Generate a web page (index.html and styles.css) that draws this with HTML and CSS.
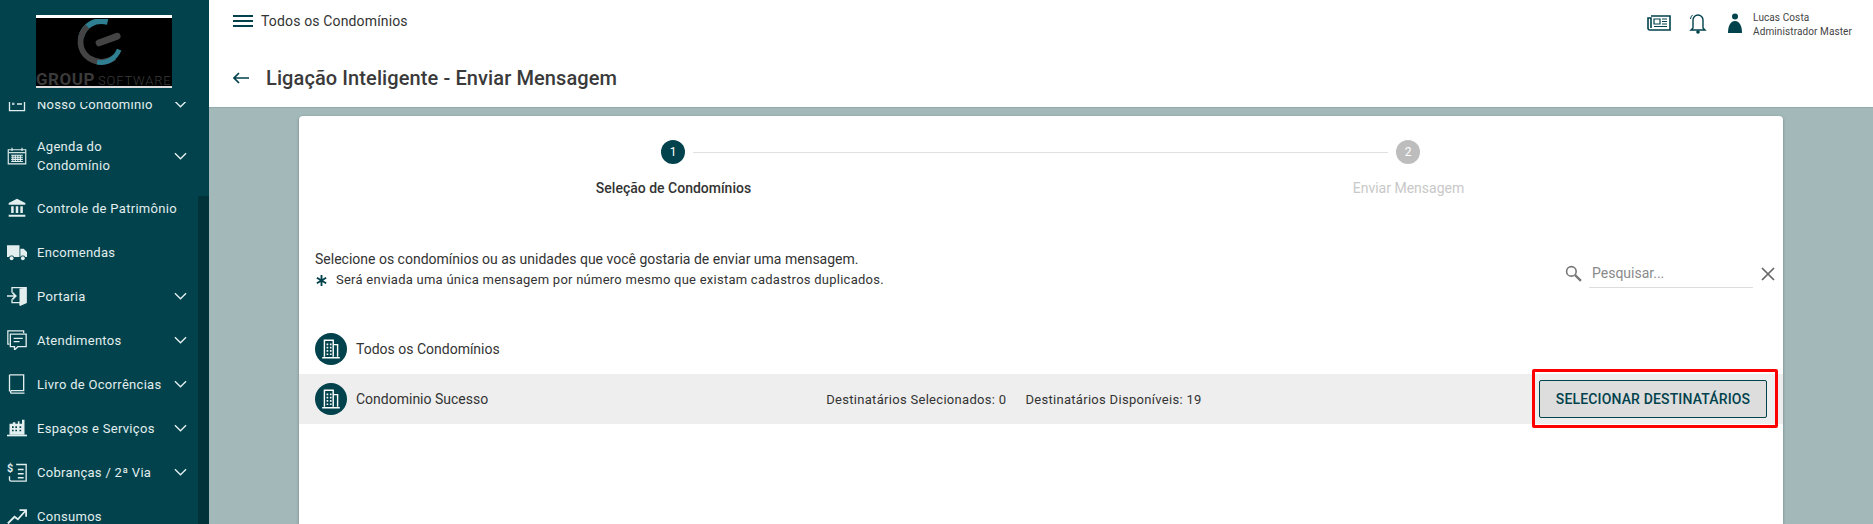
FILE: index.html
```html
<!DOCTYPE html>
<html lang="pt-BR">

<head>
    <meta charset="UTF-8">
    <meta name="viewport" content="width=device-width, initial-scale=1.0">
    <title>Ligação Inteligente - Enviar Mensagem</title>
    <link rel="stylesheet" href="styles.css">
</head>

<body>
    <aside class="sidebar">
        <div class="logo-wrap">
            <div class="logo">
                <svg class="logo-mark" viewBox="0 0 48 48">
                    <path d="M33 3 C20 0 8 6 5 20" fill="none" stroke="#2f7f92" stroke-width="6" />
                    <path d="M12 8 C2 17 2 33 14 41 C22 46 32 46 40 40" fill="none" stroke="#444" stroke-width="6" />
                    <path d="M22 45 C32 47 41 42 45 32" fill="none" stroke="#2f7f92" stroke-width="5" />
                    <path d="M24 25 L43 18" fill="none" stroke="#444" stroke-width="7" stroke-linecap="round" />
                </svg>
                <div class="logo-text"><b>GROUP</b> <span>SOFTWARE</span></div>
            </div>
        </div>
        <nav class="menu">
            <a class="menu-item menu-first">
                <svg class="menu-icon" viewBox="0 0 24 24"><path d="M3 3h18v17H3zM6 9h3M6 12h3M12 12h6" fill="none" stroke="currentColor" stroke-width="1.6" /></svg>
                <span class="menu-label">Nosso Condomínio</span>
                <svg class="chevron" viewBox="0 0 14 8"><path d="M1 1l6 6 6-6" /></svg>
            </a>
            <a class="menu-item menu-tall">
                <svg class="menu-icon" viewBox="0 0 24 24"><path d="M1.500 4.500h21v17h-21z" fill="none" stroke="currentColor" stroke-width="1.400" /><path d="M2 8h20" stroke="currentColor" stroke-width="1.400" /><path d="M6 2v4M18 2v4" stroke="currentColor" stroke-width="1.400" /><path d="M5 11h14M5 13.500h14M5 16h14M5 18.500h14M7 10.500v8.500M10 10.500v8.500M13 10.500v8.500M16 10.500v8.500" stroke="currentColor" stroke-width="1.300" /></svg>
                <span class="menu-label">Agenda do<br>Condomínio</span>
                <svg class="chevron" viewBox="0 0 14 8"><path d="M1 1l6 6 6-6" /></svg>
            </a>
            <a class="menu-item">
                <svg class="menu-icon" viewBox="0 0 24 24"><path d="M12 1L2 6v2h20V6zM5 10h3v8H5zM10.500 10h3v8h-3zM16 10h3v8h-3zM2 20h20v2.500H2z" fill="currentColor" /></svg>
                <span class="menu-label">Controle de Patrimônio</span>
            </a>
            <a class="menu-item">
                <svg class="menu-icon" viewBox="0 0 24 24"><path d="M0 4h15v14H8.500a3.500 3.500 0 0 0-6 0H0zM16 8h4l4 4v6h-2a3.500 3.500 0 0 0-6 0z" fill="currentColor" /><circle cx="5.500" cy="19.500" r="2.300" fill="currentColor" /><circle cx="19" cy="19.500" r="2.300" fill="currentColor" /></svg>
                <span class="menu-label">Encomendas</span>
            </a>
            <a class="menu-item">
                <svg class="menu-icon" viewBox="0 0 24 24"><path d="M6 8V2h17v18l-7 3v-3H6v-4" fill="none" stroke="currentColor" stroke-width="1.600" /><path d="M15 3l8-1v18l-8 3z" fill="currentColor" /><path d="M0 12h10M6.500 8l4 4-4 4" fill="none" stroke="currentColor" stroke-width="2" /></svg>
                <span class="menu-label">Portaria</span>
                <svg class="chevron" viewBox="0 0 14 8"><path d="M1 1l6 6 6-6" /></svg>
            </a>
            <a class="menu-item">
                <svg class="menu-icon" viewBox="0 0 24 24"><path d="M3 17H1V1h19v3" fill="none" stroke="currentColor" stroke-width="1.500" /><path d="M4 5h19v15H13l-4 4v-4H4z" fill="none" stroke="currentColor" stroke-width="1.600" /><path d="M8 10h11M8 14h7" stroke="currentColor" stroke-width="1.600" /></svg>
                <span class="menu-label">Atendimentos</span>
                <svg class="chevron" viewBox="0 0 14 8"><path d="M1 1l6 6 6-6" /></svg>
            </a>
            <a class="menu-item">
                <svg class="menu-icon" viewBox="0 0 24 24"><path d="M3 1h17v19H5a2 2 0 0 0 0 3h16" fill="none" stroke="currentColor" stroke-width="1.600" /><path d="M3 1v20" stroke="currentColor" stroke-width="1.600" /></svg>
                <span class="menu-label">Livro de Ocorrências</span>
                <svg class="chevron" viewBox="0 0 14 8"><path d="M1 1l6 6 6-6" /></svg>
            </a>
            <a class="menu-item">
                <svg class="menu-icon" viewBox="0 0 24 24"><path d="M3 7h4V5h3v2h3V4h2v3h3V2h3v18H3z" fill="currentColor" /><path d="M0 20h24v2H0z" fill="currentColor" /><path d="M6 10h2v2H6zM10 10h2v2h-2zM6 14h2v2H6zM10 14h2v2h-2zM15 10h2v2h-2zM15 14h2v2h-2z" fill="#01424c" /></svg>
                <span class="menu-label">Espaços e Serviços</span>
                <svg class="chevron" viewBox="0 0 14 8"><path d="M1 1l6 6 6-6" /></svg>
            </a>
            <a class="menu-item">
                <svg class="menu-icon" viewBox="0 0 24 24"><path d="M11 3h12v20H5a2 2 0 0 1-2-2v-4" fill="none" stroke="currentColor" stroke-width="1.600" /><path d="M13 9h7M13 14h7M13 19h7" stroke="currentColor" stroke-width="1.800" /><text x="0" y="12" class="menu-dollar">$</text></svg>
                <span class="menu-label">Cobranças / 2ª Via</span>
                <svg class="chevron" viewBox="0 0 14 8"><path d="M1 1l6 6 6-6" /></svg>
            </a>
            <a class="menu-item">
                <svg class="menu-icon" viewBox="0 0 24 24"><path d="M1 21l8-8 4 3 9-10M15 5h8v8" fill="none" stroke="currentColor" stroke-width="2.200" /></svg>
                <span class="menu-label">Consumos</span>
            </a>
        </nav>
        <div class="sidebar-scroll"></div>
    </aside>

    <div class="main">
        <header class="header">
            <div class="topbar">
                <div class="hamburger"><span></span><span></span><span></span></div>
                <span class="topbar-title">Todos os Condomínios</span>
                <div class="topbar-right">
                    <svg class="icon-news" viewBox="0 0 24 16"><path d="M4 1h19v14H3a2 2 0 0 1-2-2V3h3v10" fill="none" stroke="#01424c" stroke-width="1.600" /><path d="M7 4h6v5H7z" fill="none" stroke="#01424c" stroke-width="1.200" /><path d="M15 4h5M15 6.500h5M15 9h5M7 11.500h13" stroke="#01424c" stroke-width="1.200" /></svg>
                    <svg class="icon-bell" viewBox="0 0 18 22"><path d="M4 16V8a5 5 0 0 1 10 0v8l2 2H2z" fill="none" stroke="#01424c" stroke-width="1.400" /><circle cx="9" cy="20" r="1.800" fill="#01424c" /><path d="M1.500 7a6 6 0 0 1 2-4" fill="none" stroke="#01424c" stroke-width="1" /></svg>
                    <svg class="icon-user" viewBox="0 0 14 20"><circle cx="7" cy="3.500" r="3" fill="#01424c" /><path d="M0 20c0-6 2-12 7-12s7 6 7 12z" fill="#01424c" /></svg>
                    <div class="user-info">
                        <div>Lucas Costa</div>
                        <div>Administrador Master</div>
                    </div>
                </div>
            </div>
            <div class="page-title">
                <svg class="back-arrow" viewBox="0 0 16 12"><path d="M16 6H1M6 1L1 6l5 5" fill="none" stroke="#01424c" stroke-width="1.700" /></svg>
                <h1>Ligação Inteligente - Enviar Mensagem</h1>
            </div>
        </header>

        <div class="content">
            <section class="card">
                <div class="stepper-track">
                    <div class="step-circle step-active">1</div>
                    <div class="step-line"></div>
                    <div class="step-circle step-off">2</div>
                </div>
                <div class="stepper-labels">
                    <div class="step-label">Seleção de Condomínios</div>
                    <div class="step-label step-label-off">Enviar Mensagem</div>
                </div>

                <div class="intro">
                    <div class="intro-text">
                        <p>Selecione os condomínios ou as unidades que você gostaria de enviar uma mensagem.</p>
                        <p class="intro-note">
                            <svg class="asterisk" viewBox="0 0 14 14"><path d="M7 1v12M2 4l10 6M12 4L2 10" stroke="#01424c" stroke-width="2" /></svg>
                            Será enviada uma única mensagem por número mesmo que existam cadastros duplicados.
                        </p>
                    </div>
                    <div class="search">
                        <svg class="search-icon" viewBox="0 0 16 16"><circle cx="6" cy="6" r="4.500" fill="none" stroke="#777" stroke-width="1.500" /><path d="M9.500 9.500L15 15" stroke="#777" stroke-width="2.200" /></svg>
                        <div class="search-input">Pesquisar...</div>
                        <svg class="search-clear" viewBox="0 0 14 14"><path d="M1 1l12 12M13 1L1 13" stroke="#666" stroke-width="1.700" /></svg>
                    </div>
                </div>

                <div class="list-row">
                    <div class="avatar">
                        <svg viewBox="0 0 20 20"><path d="M4 17V2h8v15M12 6h4v11M2 18h16" fill="none" stroke="#fff" stroke-width="1.300" /><path d="M6 5h1.500v1.500H6zM9 5h1.500v1.500H9zM6 8h1.500v1.500H6zM9 8h1.500v1.500H9zM6 11h1.500v1.500H6zM9 11h1.500v1.500H9zM6 14h1.500v1.500H6zM9 14h1.500v1.500H9z" fill="#fff" /></svg>
                    </div>
                    <span class="row-name">Todos os Condomínios</span>
                </div>
                <div class="list-row list-row-grey">
                    <div class="avatar">
                        <svg viewBox="0 0 20 20"><path d="M4 17V2h8v15M12 6h4v11M2 18h16" fill="none" stroke="#fff" stroke-width="1.300" /><path d="M6 5h1.500v1.500H6zM9 5h1.500v1.500H9zM6 8h1.500v1.500H6zM9 8h1.500v1.500H9zM6 11h1.500v1.500H6zM9 11h1.500v1.500H9zM6 14h1.500v1.500H6zM9 14h1.500v1.500H9z" fill="#fff" /></svg>
                    </div>
                    <span class="row-name">Condominio Sucesso</span>
                    <div class="row-stats">
                        <span>Destinatários Selecionados: 0</span>
                        <span>Destinatários Disponíveis: 19</span>
                    </div>
                    <button class="select-btn" type="button">SELECIONAR DESTINATÁRIOS</button>
                    <div class="highlight-box"></div>
                </div>
            </section>
        </div>
    </div>
</body>

</html>
```

FILE: styles.css
```css
/* Reset default margin and padding */
* {
    margin: 0;
    padding: 0;
    box-sizing: border-box;
}

body {
    font-family: 'Roboto', sans-serif;
    height: 100vh;
    display: flex;
    overflow: hidden;
    color: #333;
    background: #a2b8b9;
}

/* Sidebar */
.sidebar {
    position: relative;
    width: 209px;
    flex-shrink: 0;
    display: flex;
    flex-direction: column;
    background-color: #01424c;
    color: #e3eeee;
}

.logo-wrap {
    height: 102px;
    flex-shrink: 0;
    padding: 15px 0 0 36px;
}

.logo {
    width: 136px;
    height: 73px;
    background: #000;
    border-top: 3px solid #fff;
    border-bottom: 2px solid #ddd;
    display: flex;
    flex-direction: column;
    align-items: center;
    overflow: hidden;
}

.logo-mark {
    width: 46px;
    height: 46px;
    margin: 1px 10px 0 0;
    flex-shrink: 0;
}

.logo-text {
    width: 136px;
    margin-top: 6px;
    white-space: nowrap;
    color: #3a3a3a;
    font-size: 13px;
    line-height: 16px;
}

.logo-text b {
    font-size: 17px;
    letter-spacing: 0.5px;
}

.logo-text span {
    letter-spacing: 0.8px;
    font-weight: 300;
}

.menu {
    flex: 1;
    overflow: hidden;
}

.menu-item {
    height: 44px;
    display: flex;
    align-items: center;
    padding-left: 7px;
    font-size: 13px;
    letter-spacing: 0.3px;
    line-height: 19px;
}

.menu-first {
    margin-top: -20px;
}

.menu-tall {
    height: 60px;
}

.menu-icon {
    width: 20px;
    height: 20px;
    flex-shrink: 0;
    margin-right: 10px;
}

.menu-dollar {
    font-size: 13px;
    font-weight: 700;
    fill: currentColor;
}

.menu-label {
    width: 137px;
    white-space: nowrap;
}

.chevron {
    width: 13px;
    height: 8px;
    fill: none;
    stroke: currentColor;
    stroke-width: 1.500;
}

.sidebar-scroll {
    position: absolute;
    top: 196px;
    right: 0;
    bottom: 0;
    width: 11px;
    background: #00323a;
}

/* Main column */
.main {
    flex: 1;
    min-width: 0;
    display: flex;
    flex-direction: column;
}

.header {
    height: 108px;
    background: #fff;
    padding: 0 21px 0 24px;
    border-bottom: 1px solid #90a9aa;
}

.topbar {
    height: 44px;
    display: flex;
    align-items: center;
    padding-bottom: 2px;
}

.hamburger {
    width: 20px;
    display: flex;
    flex-direction: column;
    gap: 3px;
    margin-right: 8px;
}

.hamburger span {
    height: 2px;
    background: #01424c;
}

.topbar-title {
    font-size: 14px;
    letter-spacing: 0.15px;
}

.topbar-right {
    margin-left: auto;
    display: flex;
    align-items: center;
    margin-top: 4px;
}

.icon-news {
    width: 24px;
    height: 16px;
    margin-right: 18px;
}

.icon-bell {
    width: 18px;
    height: 22px;
    margin-right: 21px;
}

.icon-user {
    width: 14px;
    height: 20px;
    margin-right: 11px;
}

.user-info {
    font-size: 10px;
    line-height: 14px;
    letter-spacing: 0.1px;
    color: #444;
    margin-top: 3px;
}

.page-title {
    height: 64px;
    display: flex;
    align-items: center;
    padding-top: 3px;
}

.back-arrow {
    width: 16px;
    height: 12px;
    margin-right: 17px;
}

h1 {
    font-size: 20px;
    font-weight: 500;
    letter-spacing: 0.1px;
    color: #3a3a3a;
}

.content {
    flex: 1;
    padding: 8px 90px 0 90px;
    overflow: hidden;
}

.card {
    height: 100%;
    background: #fff;
    border-radius: 4px 4px 0 0;
    box-shadow: 0 1px 3px rgba(0, 0, 0, 0.3);
}

/* Stepper */
.stepper-track {
    display: flex;
    align-items: center;
    padding: 24px 363px 0 362px;
}

.step-circle {
    width: 24px;
    height: 24px;
    border-radius: 50%;
    flex-shrink: 0;
    display: flex;
    align-items: center;
    justify-content: center;
    color: #fff;
    font-size: 12px;
}

.step-active {
    background: #01424c;
}

.step-off {
    background: #bdbdbd;
}

.step-line {
    flex: 1;
    height: 1px;
    margin: 0 8px;
    background: #e0e0e0;
}

.stepper-labels {
    display: grid;
    grid-template-columns: 1fr 1fr;
    padding: 0 7px;
    margin-top: 16px;
}

.step-label {
    text-align: center;
    font-size: 14px;
    font-weight: 500;
    line-height: 16px;
}

.step-label-off {
    font-weight: 400;
    color: #c8c8c8;
}

/* Intro and search */
.intro {
    display: flex;
    align-items: flex-start;
    justify-content: space-between;
    padding: 54px 8px 0 16px;
    margin-bottom: 35px;
}

.intro-text {
    font-size: 14px;
    line-height: 18px;
}

.intro-note {
    display: flex;
    align-items: center;
    gap: 8px;
    font-size: 13px;
    letter-spacing: 0.25px;
    margin-top: 3px;
}

.asterisk {
    width: 13px;
    height: 13px;
}

.search {
    display: flex;
    align-items: center;
    margin-top: 9px;
}

.search-icon {
    width: 17px;
    height: 17px;
    margin-right: 7px;
}

.search-input {
    width: 164px;
    height: 29px;
    padding: 6px 3px;
    font-size: 14px;
    color: #8a8a8a;
    border-bottom: 1px solid #ddd;
    margin-right: 8px;
}

.search-clear {
    width: 14px;
    height: 14px;
}

/* Condominium rows */
.list-row {
    position: relative;
    height: 50px;
    display: flex;
    align-items: center;
    padding: 0 16px;
    font-size: 14px;
}

.list-row-grey {
    background: #eeeeee;
}

.avatar {
    width: 32px;
    height: 32px;
    border-radius: 50%;
    background: #01424c;
    flex-shrink: 0;
    display: flex;
    align-items: center;
    justify-content: center;
    margin-right: 9px;
}

.avatar svg {
    width: 22px;
    height: 22px;
}

.row-stats {
    margin-left: 338px;
    display: flex;
    gap: 19px;
    font-size: 13px;
    letter-spacing: 0.3px;
}

.select-btn {
    margin-left: auto;
    width: 228px;
    height: 38px;
    background: #dddddd;
    border: 1px solid #01424c;
    border-radius: 2px;
    color: #01424c;
    font-family: inherit;
    font-size: 14px;
    font-weight: 500;
    letter-spacing: 0.15px;
}

/* Red annotation over the button */
.highlight-box {
    position: absolute;
    left: 1233px;
    top: -5px;
    width: 246px;
    height: 59px;
    border: 3px solid #f00;
    border-radius: 2px;
}
```
